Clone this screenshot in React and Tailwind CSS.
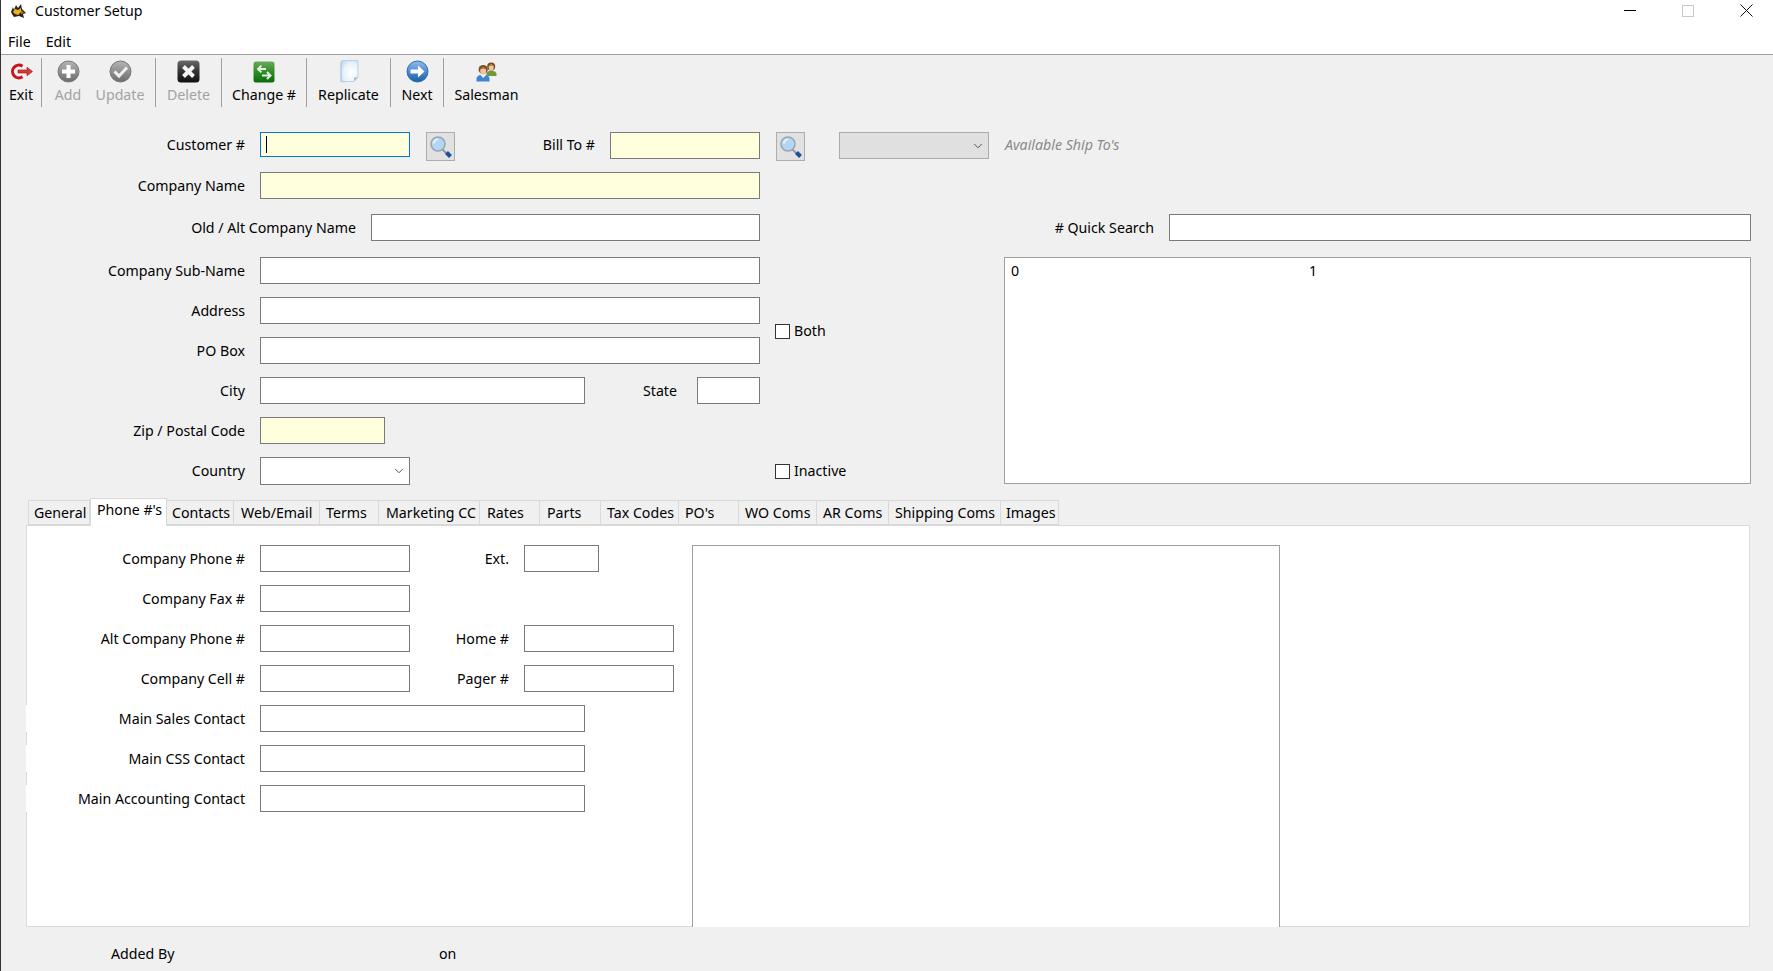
import { ChevronDown } from "lucide-react";

const font = { fontFamily: '"Noto Sans", "Open Sans", sans-serif' };

function AppIcon() {
  return (
    <svg width="17" height="17" viewBox="0 0 17 17">
      <path d="M1 10 L3 5 L4 8 L6 3 L8 6 L11 2 L12 7 L16 11 L13 12 L14 16 L9 14 L4 15 L2 12 Z" fill="#2c2418" />
      <path d="M3 10 L5 7 L8 8 L11 6 L11 10 L8 13 L5 12 Z" fill="#eeb022" />
      <path d="M11 8 L14 11 L11 12 Z" fill="#a87a20" />
    </svg>
  );
}

function ExitIcon() {
  return (
    <svg width="23" height="17" viewBox="0 0 23 17">
      <path d="M12.5 3.2 A6.4 6.4 0 1 0 12.5 13.8" fill="none" stroke="#c8141c" strokeWidth="3" />
      <path d="M8 7 H17 V4.2 L22.5 8.5 L17 12.8 V10 H8 Z" fill="#d9363a" stroke="#9c1016" strokeWidth="0.6" />
    </svg>
  );
}

function AddIcon() {
  return (
    <svg width="23" height="23" viewBox="0 0 23 23">
      <defs>
        <linearGradient id="grayA" x1="0" y1="0" x2="0" y2="1">
          <stop offset="0" stopColor="#b5b5b5" />
          <stop offset="1" stopColor="#6c6c6c" />
        </linearGradient>
      </defs>
      <circle cx="11.5" cy="11.5" r="10.5" fill="url(#grayA)" stroke="#777" />
      <path d="M9.5 5 H13.5 V9.5 H18 V13.5 H13.5 V18 H9.5 V13.5 H5 V9.5 H9.5 Z" fill="#fff" />
    </svg>
  );
}

function UpdateIcon() {
  return (
    <svg width="23" height="23" viewBox="0 0 23 23">
      <defs>
        <linearGradient id="grayU" x1="0" y1="0" x2="0" y2="1">
          <stop offset="0" stopColor="#b5b5b5" />
          <stop offset="1" stopColor="#6c6c6c" />
        </linearGradient>
      </defs>
      <circle cx="11.5" cy="11.5" r="10.5" fill="url(#grayU)" stroke="#777" />
      <path d="M5.5 11.5 L10 16 L18 7.5" fill="none" stroke="#efefef" strokeWidth="3" />
    </svg>
  );
}

function DeleteIcon() {
  return (
    <svg width="23" height="23" viewBox="0 0 23 23">
      <defs>
        <linearGradient id="blackD" x1="0" y1="0" x2="0" y2="1">
          <stop offset="0" stopColor="#6a6a6a" />
          <stop offset="0.5" stopColor="#333" />
          <stop offset="1" stopColor="#111" />
        </linearGradient>
      </defs>
      <rect x="0.5" y="0.5" width="22" height="22" rx="3.5" fill="url(#blackD)" />
      <path d="M6.5 6.5 L16.5 16.5 M16.5 6.5 L6.5 16.5" stroke="#f4f4f4" strokeWidth="4" />
    </svg>
  );
}

function ChangeIcon() {
  return (
    <svg width="22" height="22" viewBox="0 0 22 22">
      <defs>
        <linearGradient id="greenC" x1="0" y1="0" x2="0" y2="1">
          <stop offset="0" stopColor="#6aa85c" />
          <stop offset="0.55" stopColor="#2a8a22" />
          <stop offset="1" stopColor="#0b6b0b" />
        </linearGradient>
      </defs>
      <rect x="0.5" y="0.5" width="21" height="21" rx="2.5" fill="url(#greenC)" />
      <path d="M13 8 H5 M8.4 4.6 L5 8 L8.4 11.4" fill="none" stroke="#e4f0e0" strokeWidth="2" />
      <path d="M9 14.5 H17.5 M14 11 L17.5 14.5 L14 18" fill="none" stroke="#e4f0e0" strokeWidth="2" />
    </svg>
  );
}

function ReplicateIcon() {
  return (
    <svg width="20" height="23" viewBox="0 0 20 23">
      <defs>
        <radialGradient id="pageR" cx="0.6" cy="0.6" r="0.8">
          <stop offset="0" stopColor="#ffffff" />
          <stop offset="0.6" stopColor="#e6f2fc" />
          <stop offset="1" stopColor="#b6d5f0" />
        </radialGradient>
      </defs>
      <path d="M1 2 H4 V21 H5 L6 22.5 H3 Q1 22.5 1 20.5 Z" fill="#c9d3dc" />
      <path d="M3 0.5 H18 Q19 0.5 19 1.5 V17 L15 21.5 H4 Q2.5 21.5 2.5 20 V1 Z" fill="url(#pageR)" stroke="#bcd2e6" />
      <path d="M19 17 L15 17.5 L15 21.5 Z" fill="#a9bdd0" />
    </svg>
  );
}

function NextIcon() {
  return (
    <svg width="23" height="23" viewBox="0 0 23 23">
      <defs>
        <linearGradient id="blueN" x1="0" y1="0" x2="0" y2="1">
          <stop offset="0" stopColor="#8cbcec" />
          <stop offset="1" stopColor="#175ea8" />
        </linearGradient>
      </defs>
      <circle cx="11.5" cy="11.5" r="10.5" fill="url(#blueN)" stroke="#2f6fae" />
      <path d="M4.5 9.5 H12 V5.5 L18.5 11.5 L12 17.5 V13.5 H4.5 Z" fill="#fff" />
    </svg>
  );
}

function SalesmanIcon() {
  return (
    <svg width="21" height="20" viewBox="0 0 21 20">
      {/* person behind */}
      <path d="M10.5 14 V11.5 Q11 9.2 13.5 8.8 H17 Q20 9.2 20.5 11.5 V14 Z" fill="#6f9a3c" />
      <circle cx="15.2" cy="4.6" r="4" fill="#7a4a22" />
      <ellipse cx="15.2" cy="5.6" rx="2.5" ry="3" fill="#f0c8a0" />
      <path d="M12.6 4 Q15 1.8 17.8 4 L15.2 3.4 Z" fill="#7a4a22" />
      {/* person in front */}
      <path d="M0.5 19.5 V16.5 Q1 13.4 5 13 H9.5 Q13 13.4 13.5 16.5 V19.5 Z" fill="#3f86d0" />
      <path d="M4.6 13 L7.2 16 L10 13 Z" fill="#f2f7fb" />
      <circle cx="7.2" cy="7.6" r="4.6" fill="#7e4a20" />
      <ellipse cx="7.2" cy="9" rx="3" ry="3.6" fill="#f0c49a" />
      <path d="M4.2 7.2 Q7 4.8 10.2 7.2 L7.2 6.6 Z" fill="#7e4a20" />
    </svg>
  );
}

function SearchIcon() {
  return (
    <svg width="24" height="24" viewBox="0 0 24 24">
      <path d="M13 14 L18 19" stroke="#8f98a2" strokeWidth="2" />
      <path d="M17.5 17.5 L21.5 21.5" stroke="#1d4f9c" strokeWidth="4" />
      <circle cx="9" cy="9" r="7" fill="#b4d6f4" stroke="#9aa6b2" strokeWidth="1.6" />
      <path d="M4.8 8.5 A4.6 4.6 0 0 1 9 4.4" fill="none" stroke="#eaf5fd" strokeWidth="1.8" />
    </svg>
  );
}

function SearchButton() {
  return (
    <button className="flex h-[29px] w-[29px] items-center justify-center border border-[#adadad] bg-[#e1e1e1]">
      <SearchIcon />
    </button>
  );
}

function ToolButton({ icon, label, disabled, className }) {
  return (
    <div className={`flex shrink-0 flex-col items-center ${className}`}>
      <div className="flex h-[25px] items-center">{icon}</div>
      <span className={`mt-px text-[14.2px] leading-[20px] ${disabled ? "text-[#a3a3a3]" : "text-black"}`}>{label}</span>
    </div>
  );
}

function Sep() {
  return <div className="-mt-px h-[49px] w-px shrink-0 bg-[#a0a0a0]" />;
}

function Field({ className, yellow }) {
  return (
    <input
      readOnly
      className={`block h-[27px] border border-[#7a7a7a] outline-none ${yellow ? "bg-[#ffffdd]" : "bg-white"} ${className}`}
    />
  );
}

function Label({ children, className }) {
  return <span className={`shrink-0 text-right text-[14.2px] leading-[20px] text-black ${className}`}>{children}</span>;
}

function Check({ label, className }) {
  return (
    <div className={`flex items-center gap-[4px] ${className}`}>
      <div className="h-[15px] w-[15px] border border-[#333] bg-white" />
      <span className="text-[14.2px] leading-[20px]">{label}</span>
    </div>
  );
}

const tabs = [
  { name: "General", w: "w-[62px] pl-[5px]" },
  { name: "Phone #'s", w: "w-[77px] pl-[6px]", active: true },
  { name: "Contacts", w: "w-[67px] pl-[5px]" },
  { name: "Web/Email", w: "w-[86px] pl-[7px]" },
  { name: "Terms", w: "w-[59px] pl-[6px]" },
  { name: "Marketing CC", w: "w-[101px] pl-[7px]" },
  { name: "Rates", w: "w-[60px] pl-[7px]" },
  { name: "Parts", w: "w-[61px] pl-[7px]" },
  { name: "Tax Codes", w: "w-[78px] pl-[6px]" },
  { name: "PO's", w: "w-[60px] pl-[6px]" },
  { name: "WO Coms", w: "w-[78px] pl-[6px]" },
  { name: "AR Coms", w: "w-[72px] pl-[6px]" },
  { name: "Shipping Coms", w: "w-[112px] pl-[6px]" },
  { name: "Images", w: "w-[58px] pl-[5px]" },
];

export default function App() {
  return (
    <div style={font} className="flex h-[971px] w-[1773px] flex-col overflow-hidden border-l border-[#333] bg-[#f0f0f0] text-black">
      {/* Title + menu */}
      <div className="h-[55px] shrink-0 border-b border-[#a0a0a0] bg-white">
        <div className="flex h-[21px] items-center pl-[9px]">
          <AppIcon />
          <span className="ml-[8px] text-[14.2px] leading-[20px]">Customer Setup</span>
          <div className="ml-auto flex items-center">
            <div className="h-px w-[12px] bg-black" />
            <div className="ml-[46px] h-[12px] w-[12px] border border-[#c9c9c9]" />
            <svg className="ml-[46px] mr-[20px]" width="13" height="13" viewBox="0 0 13 13">
              <path d="M0.5 0.5 L12.5 12.5 M12.5 0.5 L0.5 12.5" stroke="#111" strokeWidth="1" />
            </svg>
          </div>
        </div>
        <div className="mt-[8px] flex h-[25px] items-center gap-[15px] pl-[7px] text-[14.2px]">
          <span>File</span>
          <span>Edit</span>
        </div>
      </div>

      {/* Toolbar */}
      <div className="flex h-[77px] shrink-0 items-start pt-[4px]">
        <ToolButton icon={<ExitIcon />} label="Exit" className="w-[40px]" />
        <Sep />
        <ToolButton icon={<AddIcon />} label="Add" disabled className="ml-[6px] w-[40px]" />
        <ToolButton icon={<UpdateIcon />} label="Update" disabled className="ml-[2px] w-[60px]" />
        <div className="ml-[5px]"><Sep /></div>
        <ToolButton icon={<DeleteIcon />} label="Delete" disabled className="w-[65px]" />
        <Sep />
        <ToolButton icon={<ChangeIcon />} label="Change #" className="w-[84px]" />
        <Sep />
        <ToolButton icon={<ReplicateIcon />} label="Replicate" className="w-[83px]" />
        <Sep />
        <ToolButton icon={<NextIcon />} label="Next" className="w-[52px]" />
        <Sep />
        <ToolButton icon={<SalesmanIcon />} label="Salesman" className="ml-[10px] w-[65px]" />
      </div>

      {/* Row 1 */}
      <div className="flex h-[29px] shrink-0 items-start">
        <Label className="mt-[3px] w-[244px]">Customer #</Label>
        <div className="relative ml-[15px] h-[25px] w-[150px] border border-[#0078d7] bg-[#ffffdd]">
          <div className="absolute left-[5px] top-[3px] h-[17px] w-px bg-black" />
        </div>
        <div className="ml-[16px]"><SearchButton /></div>
        <Label className="mt-[3px] w-[140px]">Bill To #</Label>
        <Field yellow className="ml-[15px] w-[150px]" />
        <div className="ml-[16px]"><SearchButton /></div>
        <div className="ml-[34px] flex h-[27px] w-[150px] items-center justify-end border border-[#acacac] bg-[#e0e0e0] pr-[3px]">
          <ChevronDown size={14} strokeWidth={1.4} color="#333" />
        </div>
        <span className="ml-[16px] mt-[3px] text-[14.2px] italic leading-[20px] text-[#8a8a8a]">Available Ship To's</span>
      </div>

      {/* Address block + quick search */}
      <div className="mt-[11px] flex h-[330px] shrink-0">
        <div className="w-[774px] shrink-0">
          <div className="flex items-center">
            <Label className="w-[244px]">Company Name</Label>
            <Field yellow className="ml-[15px] w-[500px]" />
          </div>
          <div className="mt-[15px] flex items-center">
            <Label className="w-[355px]">Old / Alt Company Name</Label>
            <Field className="ml-[15px] w-[389px]" />
          </div>
          <div className="mt-[16px] flex flex-col gap-[13px]">
            <div className="flex items-center">
              <Label className="w-[244px]">Company Sub-Name</Label>
              <Field className="ml-[15px] w-[500px]" />
            </div>
            <div className="flex items-center">
              <Label className="w-[244px]">Address</Label>
              <Field className="ml-[15px] w-[500px]" />
            </div>
            <div className="flex items-center">
              <Label className="w-[244px]">PO Box</Label>
              <Field className="ml-[15px] w-[500px]" />
            </div>
            <div className="flex items-center">
              <Label className="w-[244px]">City</Label>
              <Field className="ml-[15px] w-[325px]" />
              <Label className="w-[92px]">State</Label>
              <Field className="ml-[20px] w-[63px]" />
            </div>
            <div className="flex items-center">
              <Label className="w-[244px]">Zip / Postal Code</Label>
              <Field yellow className="ml-[15px] w-[125px]" />
            </div>
            <div className="flex items-center">
              <Label className="w-[244px]">Country</Label>
              <div className="ml-[15px] flex h-[28px] w-[150px] items-center justify-end border border-[#7a7a7a] bg-white pr-[3px]">
                <ChevronDown size={14} strokeWidth={1.4} color="#333" />
              </div>
            </div>
          </div>
        </div>

        <div className="w-[229px] shrink-0">
          <Check label="Both" className="mt-[149px]" />
          <Check label="Inactive" className="mt-[120px]" />
        </div>

        <div className="w-[747px] shrink-0 pt-[42px]">
          <div className="flex items-center">
            <Label className="w-[150px]">#&nbsp;Quick Search</Label>
            <Field className="ml-[15px] w-[582px]" />
          </div>
          <div className="mt-[16px] flex h-[227px] border border-[#a0a0a0] bg-white pl-[6px] pt-[3px] text-[14.2px] leading-[20px]">
            <span className="w-[298px]">0</span>
            <span>1</span>
          </div>
        </div>
      </div>

      {/* Tabs */}
      <div className="mt-[-2px] flex h-[25px] shrink-0 items-end pl-[27px]">
        {tabs.map((t) => (
          <div
            key={t.name}
            className={
              t.active
                ? `relative z-10 -mb-px h-[28px] shrink-0 border border-b-0 border-[#d9d9d9] bg-white text-[14.2px] leading-[22px] ${t.w}`
                : `h-[25px] shrink-0 border border-l-0 border-[#d9d9d9] bg-[#f0f0f0] text-[14.2px] leading-[24px] first:border-l ${t.w}`
            }
          >
            {t.name}
          </div>
        ))}
      </div>

      {/* Tab panel */}
      <div className="ml-[25px] flex h-[402px] w-[1724px] shrink-0 border border-[#d9d9d9] bg-white pt-[19px]">
        <div className="flex w-[665px] shrink-0 flex-col gap-[13px]">
          <div className="flex items-center">
            <Label className="w-[218px]">Company Phone #</Label>
            <Field className="ml-[15px] w-[150px]" />
            <Label className="w-[99px]">Ext.</Label>
            <Field className="ml-[15px] w-[75px]" />
          </div>
          <div className="flex items-center">
            <Label className="w-[218px]">Company Fax #</Label>
            <Field className="ml-[15px] w-[150px]" />
          </div>
          <div className="flex items-center">
            <Label className="w-[218px]">Alt Company Phone #</Label>
            <Field className="ml-[15px] w-[150px]" />
            <Label className="w-[99px]">Home #</Label>
            <Field className="ml-[15px] w-[150px]" />
          </div>
          <div className="flex items-center">
            <Label className="w-[218px]">Company Cell #</Label>
            <Field className="ml-[15px] w-[150px]" />
            <Label className="w-[99px]">Pager #</Label>
            <Field className="ml-[15px] w-[150px]" />
          </div>
          <div className="-ml-px flex items-center bg-white">
            <Label className="w-[219px]">Main Sales Contact</Label>
            <Field className="ml-[15px] w-[325px]" />
          </div>
          <div className="-ml-px flex items-center bg-white">
            <Label className="w-[219px]">Main CSS Contact</Label>
            <Field className="ml-[15px] w-[325px]" />
          </div>
          <div className="-ml-px flex items-center bg-white">
            <Label className="w-[219px]">Main Accounting Contact</Label>
            <Field className="ml-[15px] w-[325px]" />
          </div>
        </div>
        <div className="-mb-px w-[588px] shrink-0 border border-b-0 border-[#a0a0a0] bg-white" />
      </div>

      {/* Footer */}
      <div className="flex flex-1 items-center pt-[9px] text-[14.2px]">
        <span className="ml-[110px] w-[328px]">Added By</span>
        <span>on</span>
      </div>
    </div>
  );
}
